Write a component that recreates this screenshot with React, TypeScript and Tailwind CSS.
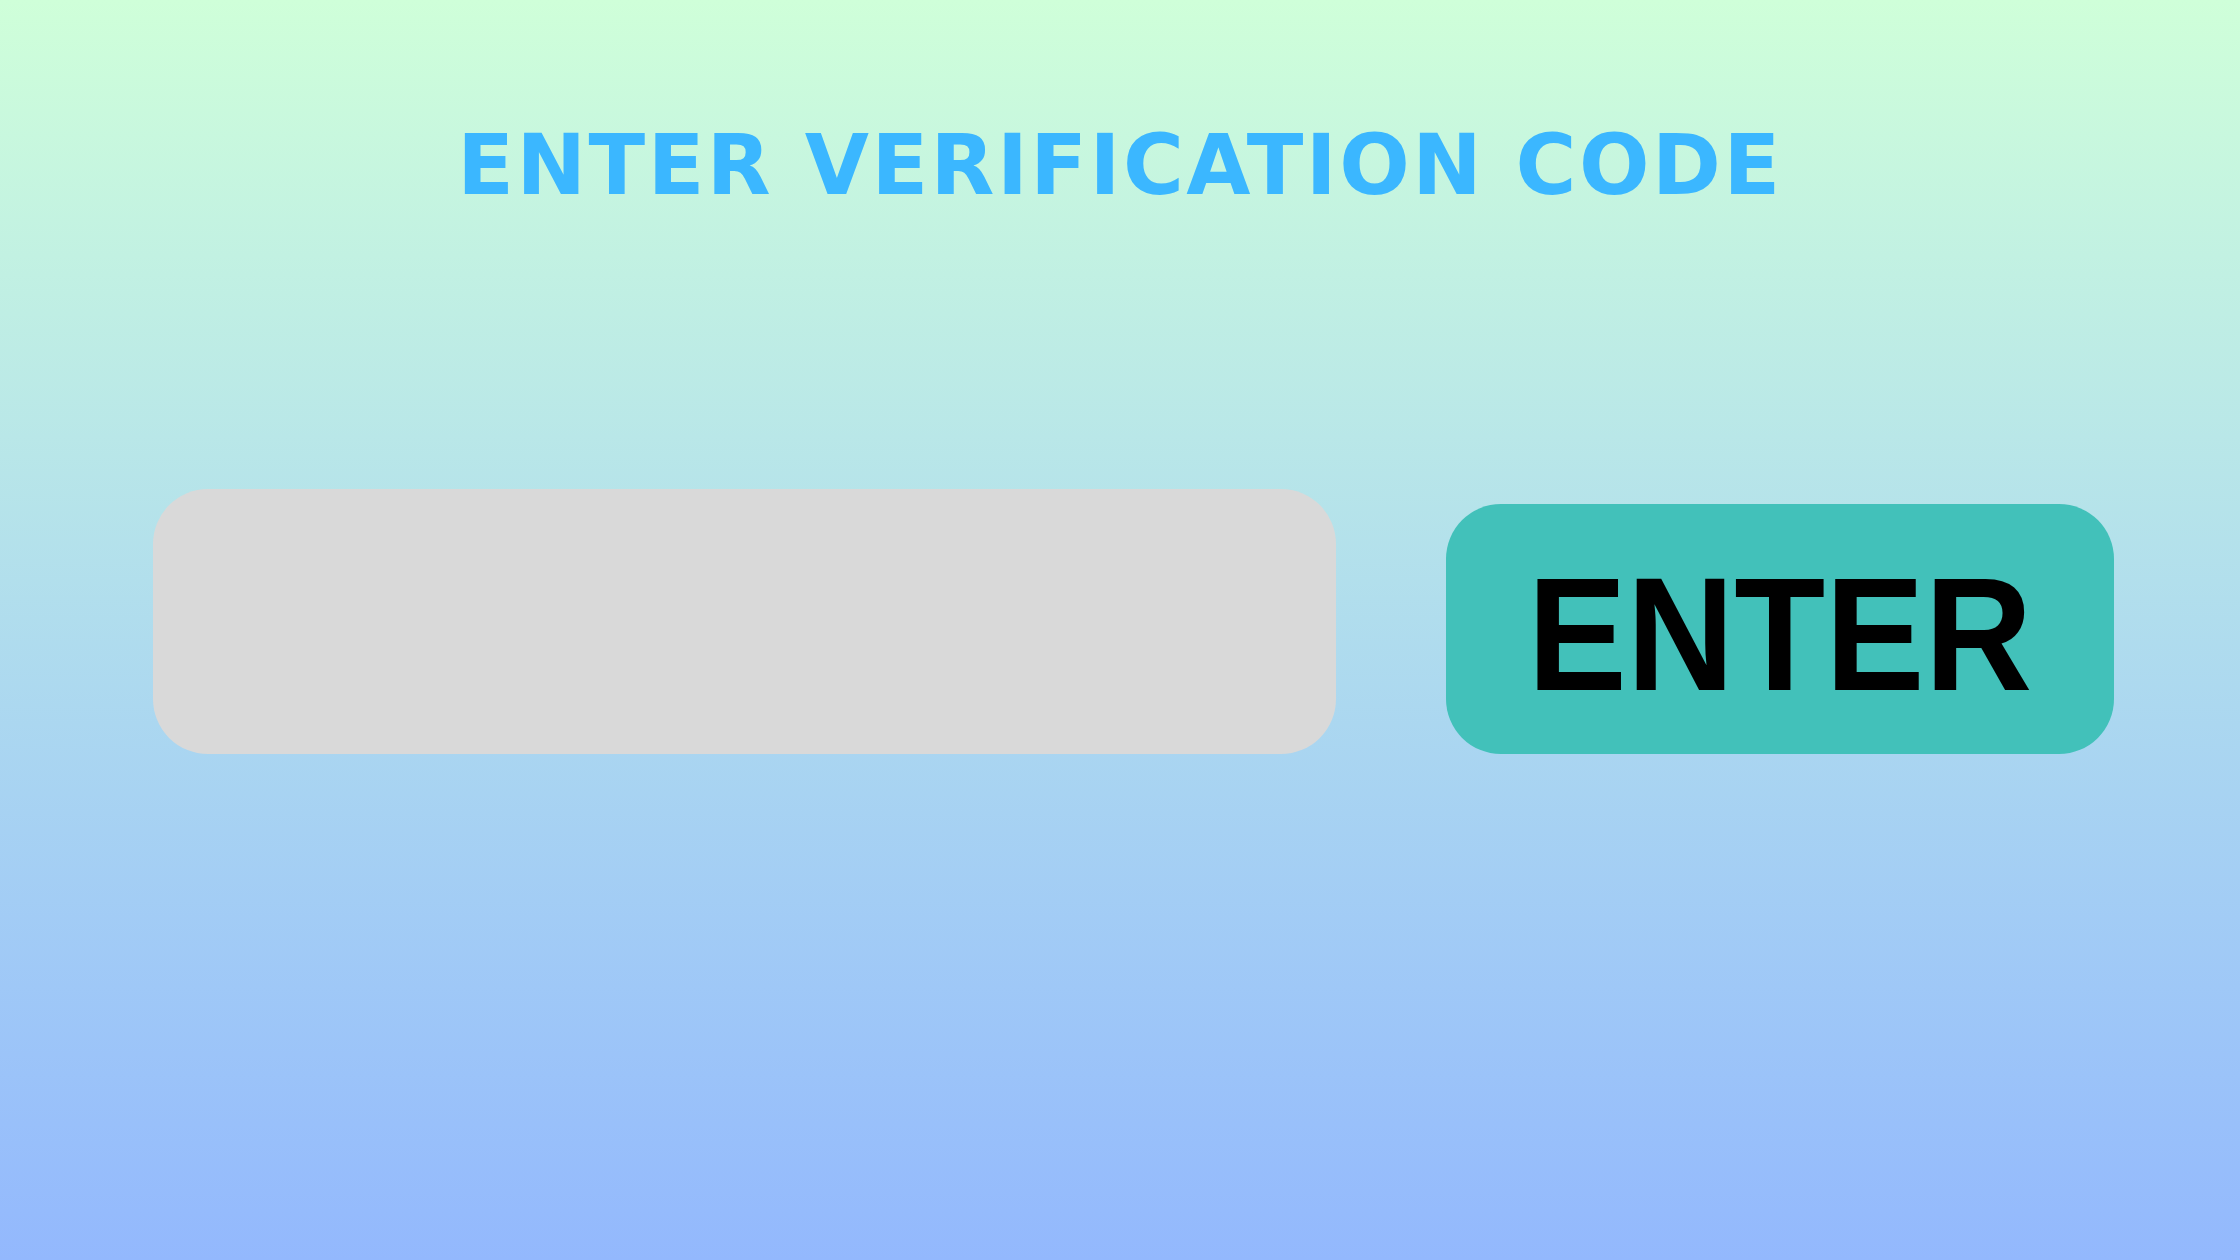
import React from "react";

export default function App() {
    return (
        <div className="w-[2240px] h-[1260px] overflow-hidden bg-gradient-to-b from-[#cfffd9] to-[#93b8fd] flex flex-col">
            <h1
                className="mt-[124px] text-center text-[83px] leading-none font-bold tracking-[2.5px] text-[#3bb7ff]"
                style={{ fontFamily: '"DejaVu Sans", sans-serif' }}
            >
                ENTER VERIFICATION CODE
            </h1>
            <div className="mt-[282px] flex items-end gap-[110px] pl-[153px]">
                <input
                    type="text"
                    aria-label="verification code"
                    className="w-[1183px] h-[265px] rounded-[55px] bg-[#d9d9d9] outline-none px-12 text-6xl"
                />
                <button
                    className="w-[668px] h-[250px] rounded-[55px] bg-[#42c1ba] flex items-center justify-center text-black font-bold text-[161px] leading-none"
                    style={{ fontFamily: '"Liberation Sans", Arial, sans-serif' }}
                >
                    <span className="inline-block scale-x-[0.925] translate-y-[5px]">ENTER</span>
                </button>
            </div>
        </div>
    );
}
